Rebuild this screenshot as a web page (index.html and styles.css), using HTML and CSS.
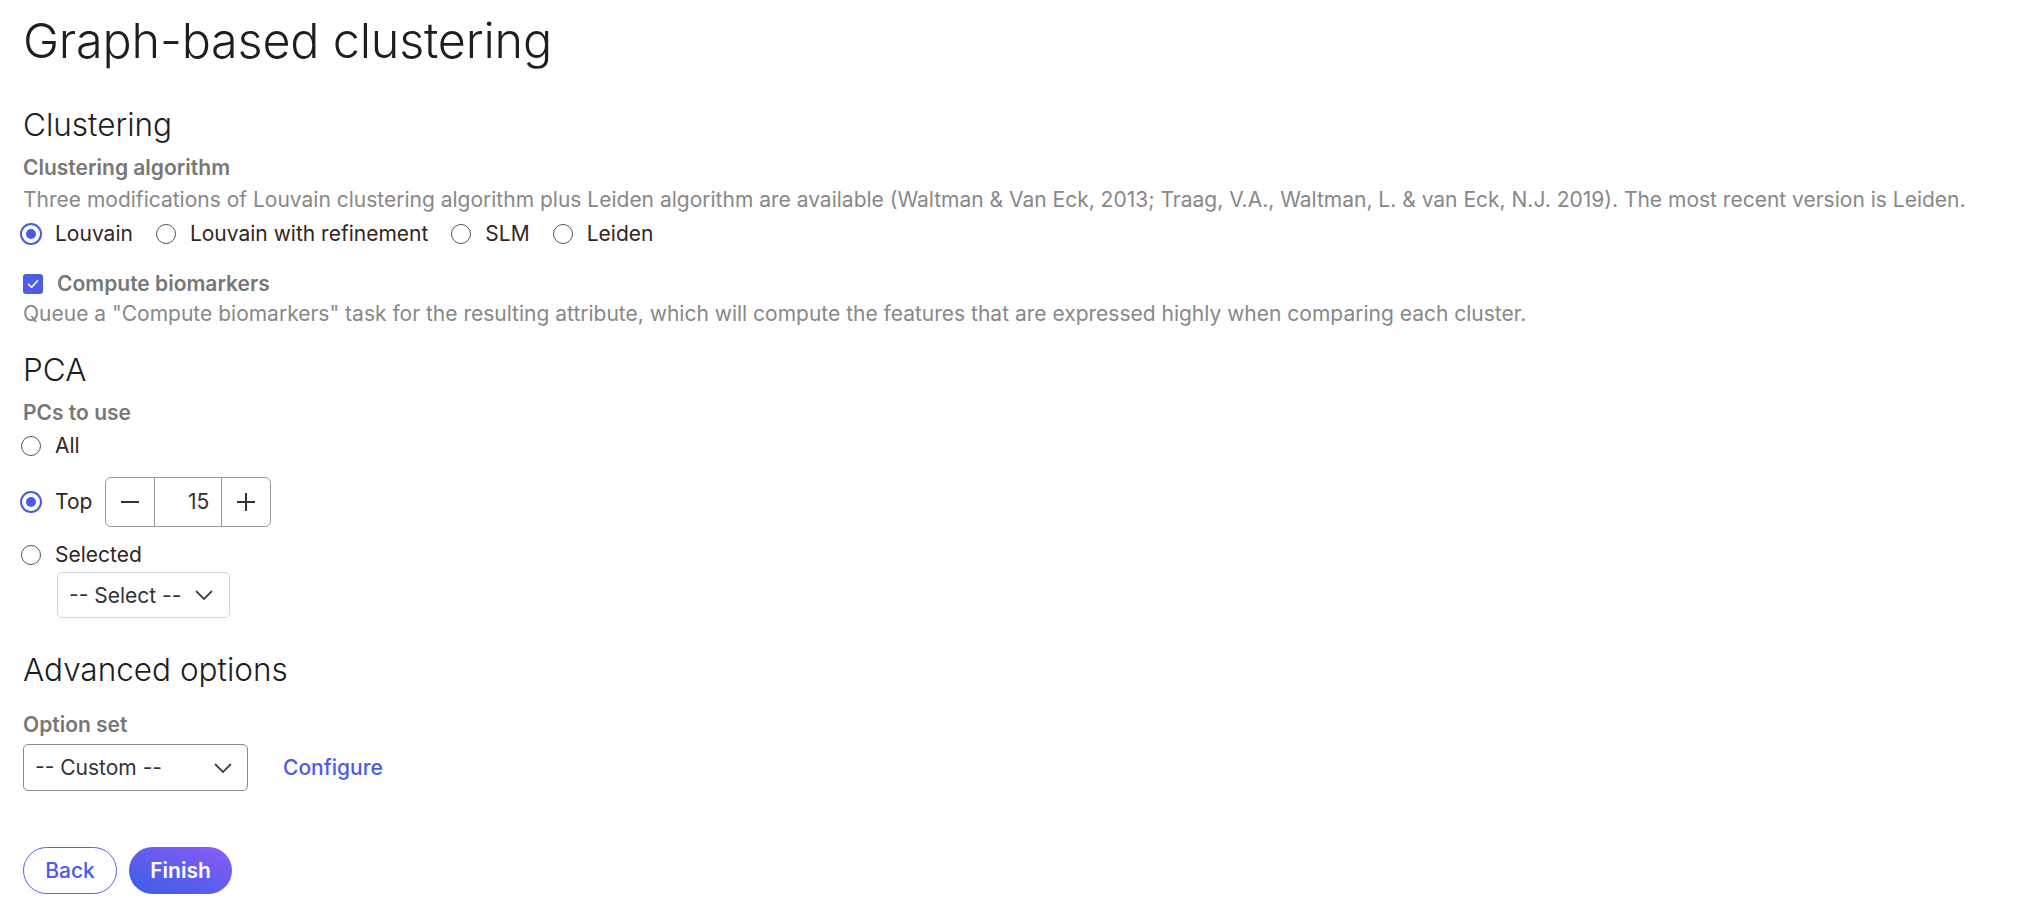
FILE: index.html
```html
<!DOCTYPE html>
<html lang="en">
<head>
    <meta charset="UTF-8">
    <meta name="viewport" content="width=device-width, initial-scale=1.0">
    <title>Graph-based clustering</title>
    <link rel="stylesheet" href="styles.css">
</head>
<body>

    <div class="page">
        <h1>Graph-based clustering</h1>

        <!-- Clustering -->
        <h2 class="section-title">Clustering</h2>
        <div class="field-label">Clustering algorithm</div>
        <p class="help">Three modifications of Louvain clustering algorithm plus Leiden algorithm are available (Waltman &amp; Van Eck, 2013; Traag, V.A., Waltman, L. &amp; van Eck, N.J. 2019). The most recent version is Leiden.</p>
        <div class="radio-row">
            <label class="radio"><span class="dot checked"></span>Louvain</label>
            <label class="radio"><span class="dot"></span>Louvain with refinement</label>
            <label class="radio"><span class="dot"></span>SLM</label>
            <label class="radio"><span class="dot"></span>Leiden</label>
        </div>

        <label class="check-row">
            <span class="checkbox">
                <svg width="14" height="14" viewBox="0 0 14 14"><path d="M2.5 7.2 L5.6 10.2 L11.5 3.8" fill="none" stroke="#fff" stroke-width="1.6" stroke-linecap="round" stroke-linejoin="round"/></svg>
            </span>
            Compute biomarkers
        </label>
        <p class="help help-check">Queue a "Compute biomarkers" task for the resulting attribute, which will compute the features that are expressed highly when comparing each cluster.</p>

        <!-- PCA -->
        <h2 class="section-title pca">PCA</h2>
        <div class="field-label pcs">PCs to use</div>
        <div class="radio-col">
            <label class="radio row-all"><span class="dot"></span>All</label>
            <div class="row-top">
                <label class="radio"><span class="dot checked"></span>Top</label>
                <div class="stepper">
                    <button class="step-btn">
                        <svg width="20" height="20" viewBox="0 0 20 20"><path d="M1 10 H19" stroke="#333" stroke-width="2"/></svg>
                    </button>
                    <div class="step-value">15</div>
                    <button class="step-btn">
                        <svg width="20" height="20" viewBox="0 0 20 20"><path d="M1 10 H19 M10 1 V19" stroke="#333" stroke-width="2"/></svg>
                    </button>
                </div>
            </div>
            <label class="radio row-selected"><span class="dot"></span>Selected</label>
            <div class="select select-small">
                <span>-- Select --</span>
                <svg width="20" height="20" viewBox="0 0 20 20"><path d="M2 6 L10 14 L18 6" fill="none" stroke="#444" stroke-width="1.8"/></svg>
            </div>
        </div>

        <!-- Advanced -->
        <h2 class="section-title advanced">Advanced options</h2>
        <div class="field-label optset">Option set</div>
        <div class="option-row">
            <div class="select select-wide">
                <span>-- Custom --</span>
                <svg width="20" height="20" viewBox="0 0 20 20"><path d="M2 6 L10 14 L18 6" fill="none" stroke="#444" stroke-width="1.8"/></svg>
            </div>
            <a href="#" class="link">Configure</a>
        </div>

        <div class="actions">
            <button class="btn btn-back">Back</button>
            <button class="btn btn-finish">Finish</button>
        </div>
    </div>

</body>
</html>
```

FILE: styles.css
```css
body {
    font-family: Inter, "Noto Sans", sans-serif;
    margin: 0;
    padding: 0;
    background-color: white;
    color: #333;
}

.page {
    padding: 12px 23px 20px;
}

h1 {
    font-size: 48.5px;
    font-weight: 300;
    line-height: 58px;
    color: #1e1e1e;
    margin: 0;
    letter-spacing: -0.2px;
}

/* Section headings */
.section-title {
    font-size: 31.5px;
    font-weight: 300;
    line-height: 36px;
    color: #1e1e1e;
    margin: 37px 0 0;
}

.section-title.pca {
    margin-top: 23px;
}

.section-title.advanced {
    margin-top: 34px;
}

.field-label {
    font-size: 21px;
    font-weight: 600;
    line-height: 26px;
    color: #777;
    margin-top: 12px;
}

.field-label.optset {
    margin-top: 24px;
}

.help {
    font-size: 21px;
    line-height: 30px;
    color: #888;
    margin: 4px 0 0;
}

.help-check {
    margin-top: 0;
}

/* Radios */
.radio-row {
    display: flex;
    align-items: center;
    gap: 25px;
    margin-top: 4px;
}

.radio {
    display: flex;
    align-items: center;
    font-size: 21px;
    line-height: 30px;
    color: #352424;
}

.dot {
    width: 20px;
    height: 20px;
    box-sizing: border-box;
    border: 1.5px solid #555;
    border-radius: 50%;
    margin: 0 14px 0 -2px;
    flex-shrink: 0;
    position: relative;
}

.dot.checked {
    width: 22px;
    height: 22px;
    border: 2.5px solid #4a5ae8;
    margin-left: -3px;
    margin-right: 13px;
}

.dot.checked::after {
    content: "";
    position: absolute;
    left: 3.5px;
    top: 3.5px;
    width: 10px;
    height: 10px;
    border-radius: 50%;
    background-color: #4a5ae8;
}

/* Checkbox */
.check-row {
    display: flex;
    align-items: center;
    font-size: 21px;
    font-weight: 600;
    line-height: 30px;
    color: #777;
    margin-top: 20px;
}

.checkbox {
    width: 20px;
    height: 20px;
    border-radius: 3px;
    background-color: #4f5de6;
    display: flex;
    align-items: center;
    justify-content: center;
    margin-right: 14px;
}

/* PCA radios */
.radio-col {
    display: flex;
    flex-direction: column;
    align-items: flex-start;
}

.row-all {
    margin-top: 5px;
}

.row-top {
    display: flex;
    align-items: center;
    margin-top: 16px;
}

.row-top .radio {
    margin-right: 13px;
}

.stepper {
    display: flex;
    height: 50px;
    box-sizing: border-box;
    border: 1px solid #999;
    border-radius: 6px;
}

.step-btn {
    width: 48px;
    border: none;
    background: none;
    padding: 0;
    display: flex;
    align-items: center;
    justify-content: center;
}

.step-value {
    width: 68px;
    box-sizing: border-box;
    border-left: 1px solid #999;
    border-right: 1px solid #999;
    text-align: right;
    padding-right: 12px;
    font-size: 21px;
    line-height: 48px;
    color: #333;
}

.row-selected {
    margin-top: 13px;
}

/* Select boxes */
.select {
    display: flex;
    align-items: center;
    justify-content: space-between;
    box-sizing: border-box;
    border-radius: 5px;
    font-size: 21px;
    color: #333;
    background-color: white;
}

.select-small {
    width: 173px;
    height: 46px;
    border: 1px solid #d4d4d4;
    margin: 2px 0 0 34px;
    padding: 0 15px 0 11px;
}

.select-wide {
    width: 225px;
    height: 47px;
    border: 1px solid #8a8a8a;
    padding: 0 14px 0 11px;
}

.option-row {
    display: flex;
    align-items: center;
    gap: 35px;
    margin-top: 6px;
}

.link {
    text-decoration: none;
    color: #4b5bea;
    font-size: 21px;
    font-weight: 500;
}

/* Buttons */
.actions {
    display: flex;
    gap: 12px;
    margin-top: 56px;
}

.btn {
    height: 47px;
    border-radius: 24px;
    font-family: Inter, "Noto Sans", sans-serif;
    font-size: 21px;
    cursor: pointer;
}

.btn-back {
    width: 94px;
    background-color: white;
    border: 1px solid #5563ea;
    color: #4b5bea;
    font-weight: 500;
}

.btn-finish {
    width: 103px;
    border: none;
    color: white;
    font-weight: 600;
    background: linear-gradient(20deg, #3a5ee6 0%, #6a5cf0 60%, #8e5cf6 100%);
}
```
